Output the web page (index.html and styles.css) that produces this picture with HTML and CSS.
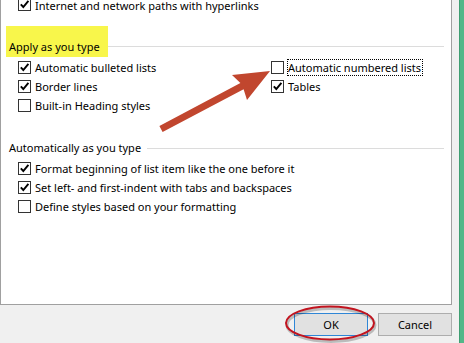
FILE: index.html
```html
<!DOCTYPE html>
<html lang="en">
<head>
    <meta charset="UTF-8">
    <meta name="viewport" content="width=device-width, initial-scale=1.0">
    <title>AutoFormat As You Type</title>
    <link rel="stylesheet" href="styles.css">
</head>
<body>
    <div class="window">
        <div class="dialog">
            <div class="panel">
                <div class="option top-cut">
                    <span class="box on"><svg viewBox="0 0 11 11"><path d="M1.8 5.4 L4.3 8 L9.4 1.8"/></svg></span>
                    <span class="top-text">Internet and network paths with hyperlinks</span>
                </div>

                <div class="group-head marked">
                    <span class="group-label">Apply as you type</span>
                    <span class="group-line"></span>
                </div>
                <div class="options two-col">
                    <div class="option">
                        <span class="box on"><svg viewBox="0 0 11 11"><path d="M1.8 5.4 L4.3 8 L9.4 1.8"/></svg></span>
                        Automatic bulleted lists
                    </div>
                    <div class="option">
                        <span class="box"></span>
                        <span class="focus">Automatic numbered lists</span>
                    </div>
                    <div class="option">
                        <span class="box on"><svg viewBox="0 0 11 11"><path d="M1.8 5.4 L4.3 8 L9.4 1.8"/></svg></span>
                        Border lines
                    </div>
                    <div class="option">
                        <span class="box on"><svg viewBox="0 0 11 11"><path d="M1.8 5.4 L4.3 8 L9.4 1.8"/></svg></span>
                        Tables
                    </div>
                    <div class="option">
                        <span class="box"></span>
                        Built-in Heading styles
                    </div>
                </div>

                <div class="group-head plain">
                    <span class="group-label">Automatically as you type</span>
                    <span class="group-line"></span>
                </div>
                <div class="options">
                    <div class="option">
                        <span class="box on"><svg viewBox="0 0 11 11"><path d="M1.8 5.4 L4.3 8 L9.4 1.8"/></svg></span>
                        Format beginning of list item like the one before it
                    </div>
                    <div class="option">
                        <span class="box on"><svg viewBox="0 0 11 11"><path d="M1.8 5.4 L4.3 8 L9.4 1.8"/></svg></span>
                        Set left- and first-indent with tabs and backspaces
                    </div>
                    <div class="option">
                        <span class="box"></span>
                        Define styles based on your formatting
                    </div>
                </div>
            </div>

            <div class="footer">
                <button class="btn default">OK</button>
                <button class="btn">Cancel</button>
            </div>
        </div>
        <div class="edge"></div>
    </div>

    <!-- annotations drawn over the screenshot -->
    <svg class="marks" viewBox="0 0 464 343">
        <polygon class="arrow" points="159.4,125.9 240.4,83.1 232,75 270,71 247,100 243.6,89.3 162.6,132.1"/>
        <ellipse class="ring-shadow" cx="331" cy="325" rx="44" ry="16.5"/>
        <ellipse class="ring" cx="330" cy="323" rx="44" ry="16.5"/>
    </svg>
</body>
</html>
```

FILE: styles.css
```css
* {
    margin: 0;
    padding: 0;
    box-sizing: border-box;
}

body {
    width: 464px;
    height: 343px;
    overflow: hidden;
    position: relative;
    background: #f0f0f0;
    color: #000;
    font-family: "Noto Sans", "Open Sans", sans-serif;
    font-size: 11px;
    line-height: 16px;
}

.window {
    display: flex;
    height: 100%;
}

.dialog {
    width: 459px;
    display: flex;
    flex-direction: column;
}

.edge {
    width: 5px;
    background: #52b788;
    border-left: 1px solid #3f9f72;
}

.panel {
    width: 452px;
    height: 305px;
    background: #fff;
    border: 1px solid #a0a0a0;
    border-top: none;
    overflow: hidden;
}

.option {
    display: flex;
    align-items: center;
    height: 19px;
    padding-left: 17px;
    white-space: nowrap;
}

.top-cut {
    margin-top: -4px;
    height: 18px;
    align-items: flex-start;
}

.top-cut .box {
    margin-top: 2px;
}

.top-text {
    margin-top: 4px;
    line-height: 11px;
}

.box {
    width: 13px;
    height: 13px;
    flex-shrink: 0;
    margin-right: 4px;
    border: 1px solid #333;
    background: #fff;
    display: flex;
}

.box svg {
    width: 11px;
    height: 11px;
}

.box svg path {
    fill: none;
    stroke: #000;
    stroke-width: 1.9;
}

.focus {
    outline: 1px dotted #000;
    outline-offset: 0;
    padding: 0 1px 0 0;
    line-height: 15px;
}

.group-head {
    display: flex;
    align-items: flex-end;
    margin-left: 5px;
    margin-right: 7px;
}

.group-label {
    padding: 0 6px 0 3px;
}

.group-line {
    flex: 1;
    height: 1px;
    background: #dcdcdc;
}

.group-head.marked {
    margin-top: 12px;
    height: 31px;
}

.group-head.marked .group-label {
    background: #f8f64b;
    padding: 13px 8px 2px 3px;
}

.group-head.marked .group-line {
    margin-bottom: 10px;
}

.group-head.plain {
    margin-top: 25px;
    align-items: center;
}

.options {
    margin-top: 3px;
}

.two-col {
    margin-top: 1px;
    padding-left: 17px;
    display: grid;
    grid-template-columns: 253px 1fr;
}

.two-col .option {
    padding-left: 0;
}

.footer {
    display: flex;
    justify-content: flex-end;
    gap: 10px;
    padding: 8px 7px 0 0;
}

.btn {
    width: 74px;
    height: 23px;
    font: inherit;
    color: #000;
    background: #e1e1e1;
    border: 1px solid #adadad;
}

.btn.default {
    border-color: #2f86d6;
}

.marks {
    position: absolute;
    top: 0;
    left: 0;
    width: 464px;
    height: 343px;
    pointer-events: none;
}

.arrow {
    fill: #c1462e;
}

.ring {
    fill: none;
    stroke: #c2141f;
    stroke-width: 2;
}

.ring-shadow {
    fill: none;
    stroke: rgba(0, 0, 0, 0.22);
    stroke-width: 3;
}
```
